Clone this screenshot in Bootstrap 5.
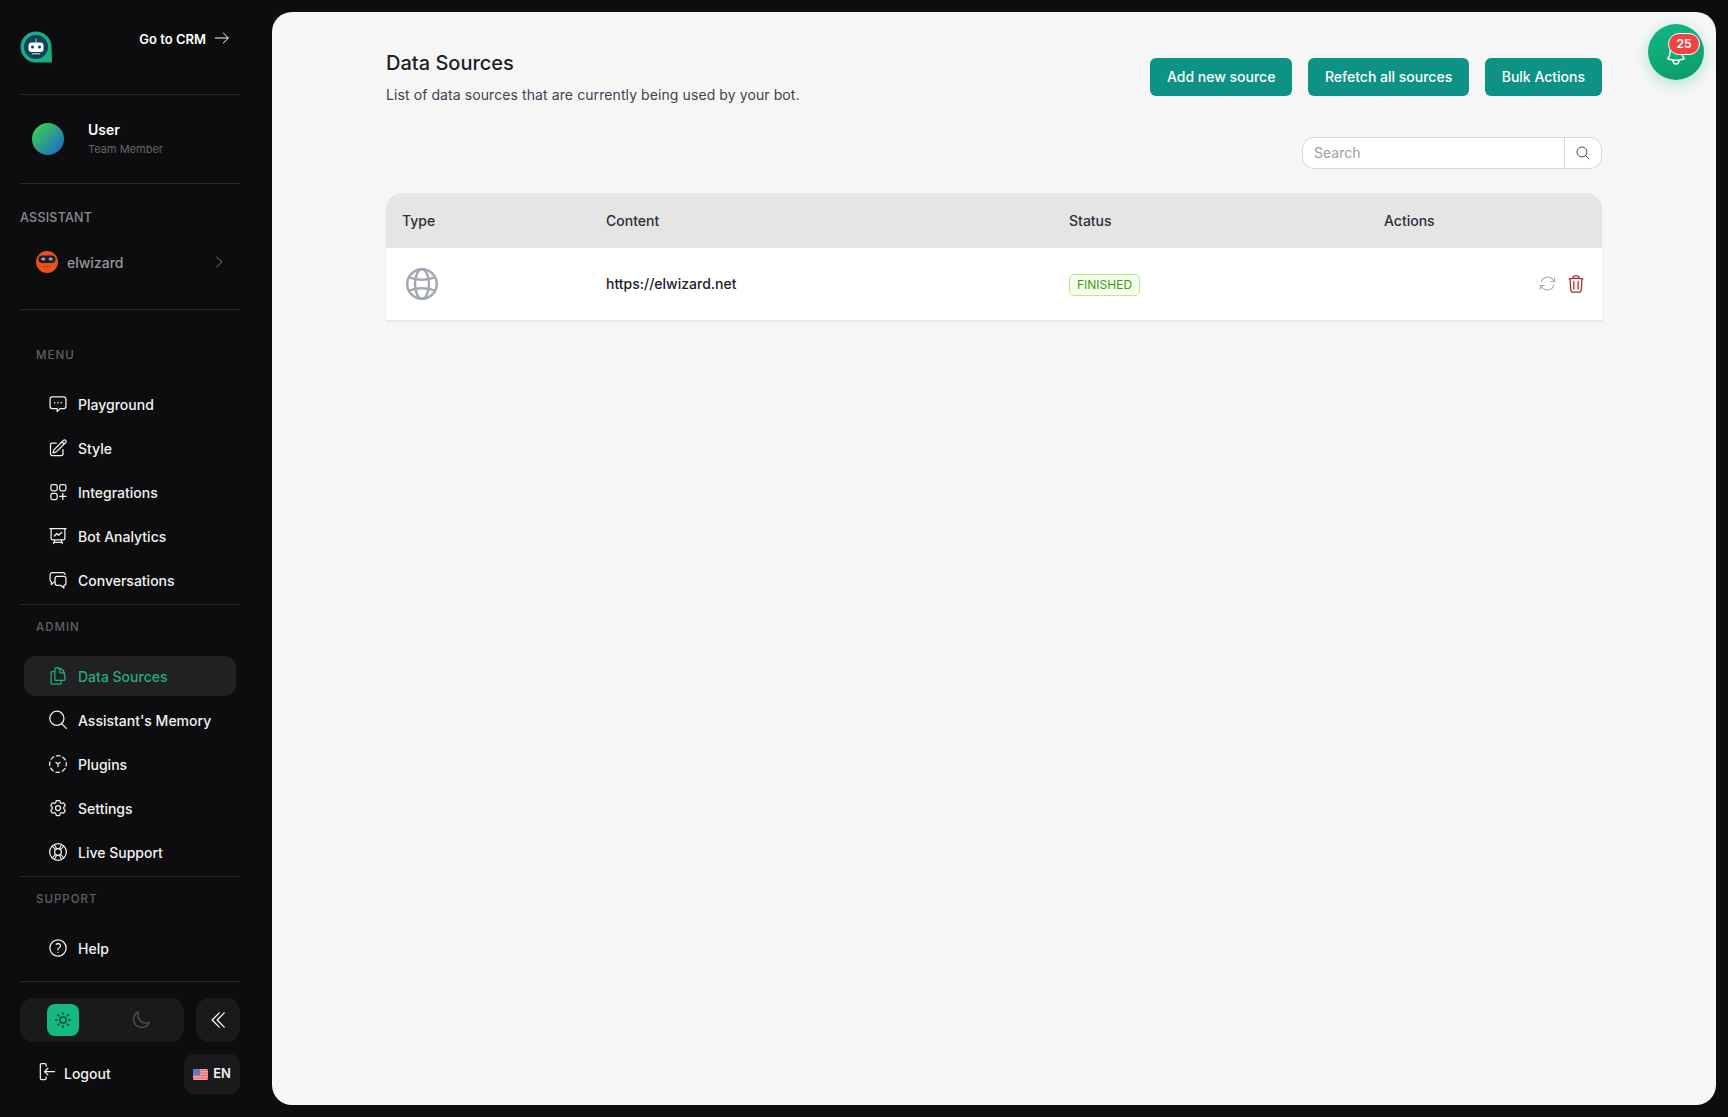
<!DOCTYPE html>
<html lang="en">
<head>
<meta charset="utf-8">
<title>Data Sources</title>
<link href="https://cdn.jsdelivr.net/npm/bootstrap@5.3.0/dist/css/bootstrap.min.css" rel="stylesheet">
<style>
html,body{height:100%;}
body{background:#0d0d0f;font-family:"Inter","Liberation Sans",sans-serif;font-size:14px;color:#1f2328;overflow:hidden;}
.shell{height:1117px;}
.side{width:272px;flex:none;padding:0 32px 0 20px;color:#fff;}
.rule{height:1px;background:#2b2b2d;flex:none;}
.brand{height:94px;padding-top:31px;}
.crm{color:#fff;font-weight:600;font-size:13px;text-decoration:none;height:16px;margin:-1px 10px 0 0;line-height:16px;}
.crm-t{margin-top:1px;}
.who{height:88px;padding-left:12px;gap:24px;}
.ava{width:32px;height:32px;border-radius:50%;background:linear-gradient(135deg,#3ddc3f,#1a5fd8);}
.who-name{font-weight:600;font-size:14px;line-height:17px;}
.who-role{font-size:11px;color:#66676b;line-height:16px;margin-top:3px;}
.asst-h{font-size:12.5px;font-weight:500;color:#8b8c8f;line-height:16px;padding-top:26px;letter-spacing:.25px;}
.asst-row{height:46px;margin:13px 0 24px;padding:0 15px 0 16px;color:#97989b;font-weight:500;gap:9px;}
.grp-h{font-size:11.5px;font-weight:500;letter-spacing:1px;color:#606165;line-height:18px;padding:13px 0 0 16px;margin-bottom:20px;}
.grp-first{padding-top:36px;}
.navi{list-style:none;padding:0;margin:0 4px;display:flex;flex-direction:column;gap:4px;}
.navi a{display:flex;align-items:center;height:40px;padding-left:24px;gap:10px;color:#f2f2f2;font-weight:500;font-size:14px;text-decoration:none;border-radius:12px;}
.navi a.on{background:#212123;color:#1fae7e;}
.ico{width:20px;height:20px;flex:none;fill:none;stroke:currentColor;stroke-width:1.5;stroke-linecap:round;stroke-linejoin:round;}
.crm-a{width:16px;height:16px;}
.chev{width:12px;height:12px;}
.gap-after{margin-bottom:4px;}
.tail-gap{margin-top:13px;}
.modes{height:44px;width:164px;background:#1a1a1c;border-radius:14px;margin-top:16px;padding-left:27px;}
.sunbox{width:32px;height:32px;border-radius:8px;background:#14b883;color:#0b3a2b;}
.moonbox{color:#55565a;margin-left:46px;width:32px;}
.collapse-btn{width:44px;height:44px;border-radius:14px;background:#1a1a1c;color:#fff;margin-top:16px;}
.foot{margin-top:12px;}
.out{color:#f2f2f2;font-weight:500;text-decoration:none;padding-left:17px;gap:7px;margin-bottom:2px;}
.out-i{margin-top:-3px;}
.lang{width:56px;height:40px;border-radius:10px;background:#1a1a1c;color:#f2f2f2;font-size:13px;font-weight:600;gap:5px;}
.pane{flex:1;margin:12px 12px 12px 0;background:#f6f6f7;border-radius:20px;padding:37px 114px 0;position:relative;}
.ttl{font-size:20px;font-weight:500;line-height:28px;color:#1c2127;margin:0;}
.sub{font-size:14px;line-height:20px;margin:8px 0 0;color:#3c4250;letter-spacing:.09px;}
.tealbtn{background:linear-gradient(180deg,#0d9484,#0e9186);border:0;color:#fff;font-weight:500;font-size:14px;height:38px;border-radius:6px;padding:0 17px 2px;}
.tealbtn:hover{background:#0d9484;color:#fff;}
.hdbtns{gap:15.5px;margin-top:9px;}
.srch{width:300px;margin-top:32px;height:32px;}
.srch .form-control{height:32px;font-size:14px;padding:0 11px 2px;border:1px solid #d6d8dc;border-radius:12px 0 0 12px;}
.srch .form-control::placeholder{color:#9a9ea6;}
.srch .input-group-text{height:32px;width:38px;background:#fff;border:1px solid #d6d8dc;border-radius:0 12px 12px 0;justify-content:center;padding:0 1px 0 0;color:#4b5058;}
.srch-i{width:16px;height:16px;}
.tblwrap{margin-top:24px;border-radius:16px 16px 0 0;overflow:hidden;box-shadow:0 1px 2px rgba(0,0,0,.05);}
.dt{margin:0;table-layout:fixed;width:1216px;}
.c1{width:204px;}.c2{width:463px;}.c3{width:315px;}.c4{width:234px;}
.dt th{background:#e5e5e6;height:55px;padding:0 16px 1px;vertical-align:middle;font-weight:500;font-size:14px;color:#2a2f36;border:0;}
.dt td{background:#fff;height:72px;padding:0 16px;vertical-align:middle;font-size:14px;font-weight:450;color:#1c2127;border-bottom:1px solid #e4e6e8;}
.gl{width:32px;height:32px;fill:none;stroke:#a2a7b1;stroke-width:2.4;display:block;margin-left:4px;}
.dt td.st{padding-top:2px;}
.fin{background:#f6ffed;border:1px solid #b7eb8f;color:#389e0d;font-size:12px;font-weight:400;border-radius:5px;padding:0 7px;height:22px;line-height:20px;}
.acts{gap:9px;}
.ref{color:#a6a9ae;width:19px;height:19px;stroke-width:1.3;}
.trs{color:#a4262c;width:20px;height:20px;}
.bellbtn{position:absolute;top:12px;right:12px;width:56px;height:56px;border-radius:50%;background:linear-gradient(160deg,#12b886,#0b9a68);box-shadow:0 4px 14px rgba(16,185,129,.3);color:#fff;}
.bell-i{position:absolute;left:16px;top:19px;width:24px;height:24px;}
.bell-n{position:absolute;left:20px;top:9px;width:32px;height:22px;border-radius:11px;background:#ef4444;border:1px solid #fff;color:#fff;font-size:12px;font-weight:600;line-height:20px;text-align:center;}
</style>
</head>
<body>
<div class="shell d-flex">
  <aside class="side d-flex flex-column">
    <div class="brand d-flex justify-content-between align-items-start">
      <svg width="32" height="32" viewBox="0 0 32 32" aria-label="logo"><defs><linearGradient id="lg" x1="0" y1="0" x2="1" y2="1"><stop offset="0" stop-color="#17ab9c"/><stop offset="1" stop-color="#15b177"/></linearGradient></defs><path d="M16 .5a15.500 15.500 0 0 1 15.500 15.500l.5 14.500a1 1 0 0 1-1 1H16A15.500 15.500 0 0 1 16 .5z" fill="url(#lg)"/><circle cx="16" cy="16" r="12" fill="#0f4254"/><rect x="8.500" y="11.500" width="15" height="9.500" rx="3" fill="#fff"/><circle cx="12.500" cy="16" r="1.500" fill="#0f4254"/><circle cx="19.500" cy="16" r="1.500" fill="#0f4254"/><path d="M16 7.500v4" stroke="#cfd8dc" stroke-width="1"/><rect x="11.500" y="22" width="9" height="1.500" rx=".7" fill="#9fb4bc"/></svg>
      <a class="crm d-flex align-items-start gap-2" href="#"><span class="crm-t">Go to CRM</span><svg class="ico crm-a" viewBox="0 0 24 24" stroke-width="1.300"><path d="M2 12h19M14 4.500l7.500 7.500-7.500 7.500"/></svg></a>
    </div>
    <div class="rule"></div>
    <div class="who d-flex align-items-center">
      <div class="ava flex-none"></div>
      <div><div class="who-name">User</div><div class="who-role">Team Member</div></div>
    </div>
    <div class="rule"></div>
    <div class="asst-h">ASSISTANT</div>
    <div class="asst-row d-flex align-items-center">
      <svg width="22" height="22" viewBox="0 0 22 22"><circle cx="11" cy="11" r="11" fill="#e9501f"/><rect x="2.500" y="4.500" width="17" height="7.500" rx="3.700" fill="#2a1a18"/><ellipse cx="7.300" cy="8" rx="2.200" ry="1.500" fill="#5fb4e8"/><ellipse cx="14.700" cy="8" rx="2.200" ry="1.500" fill="#5fb4e8"/><path d="M7 15.500h8" stroke="#8f2c0e" stroke-width="1.200" stroke-dasharray="1 1"/></svg>
      <span class="flex-grow-1">elwizard</span>
      <svg class="ico chev" viewBox="0 0 24 24" stroke-width="1.800"><path d="M7 2l11 10L7 22"/></svg>
    </div>
    <div class="rule"></div>
    <div class="grp-h grp-first">MENU</div>
    <ul class="navi gap-after">
      <li><a href="#"><svg class="ico" viewBox="0 0 24 24"><path d="M5 3.500h14A2.500 2.500 0 0 1 21.500 6v9a2.500 2.500 0 0 1-2.500 2.500h-4.500l-3.500 3.500v-3.500H5A2.500 2.500 0 0 1 2.500 15V6A2.500 2.500 0 0 1 5 3.500z"/><path d="M8 10.500h.01M12 10.500h.01M16 10.500h.01" stroke-width="2"/></svg>Playground</a></li>
      <li><a href="#"><svg class="ico" viewBox="0 0 24 24"><path d="M16.862 4.487l1.687-1.688a1.875 1.875 0 112.652 2.652L10.582 16.070a4.500 4.500 0 01-1.897 1.130L6 18l.8-2.685a4.500 4.500 0 011.130-1.897l8.932-8.931zm0 0L19.500 7.125M18 14v4.750A2.250 2.250 0 0115.750 21H5.250A2.250 2.250 0 013 18.750V8.250A2.250 2.250 0 015.250 6H10"/></svg>Style</a></li>
      <li><a href="#"><svg class="ico" viewBox="0 0 24 24"><rect x="3.500" y="3" width="7.500" height="7.500" rx="2"/><rect x="14" y="3" width="7.500" height="7.500" rx="2"/><rect x="3.500" y="13.500" width="7.500" height="7.500" rx="2"/><path d="M17.750 13.500V21M14 17.250h7.500"/></svg>Integrations</a></li>
      <li><a href="#"><svg class="ico" viewBox="0 0 24 24"><path d="M3.750 3v11.250A2.250 2.250 0 006 16.500h2.250M3.750 3h-1.500m1.500 0h16.500m0 0h1.500m-1.500 0v11.250A2.250 2.250 0 0118 16.500h-2.250m-7.500 0h7.500m-7.500 0l-1 3m8.500-3l1 3m0 0l.5 1.500m-.5-1.500h-9.500m0 0l-.5 1.500m.75-9l3-3 2.148 2.148A12.061 12.061 0 0116.500 7.605"/></svg>Bot Analytics</a></li>
      <li><a href="#"><svg class="ico" viewBox="0 0 24 24"><path d="M8 14.500H7l-3 3v-3.300A3 3 0 0 1 2.500 11.500V6A3 3 0 0 1 5.500 3h12a3 3 0 0 1 3 2.500"/><path d="M11 7.500h8a2.500 2.500 0 0 1 2.500 2.500v6a2.500 2.500 0 0 1-2.500 2.500v3l-3.500-3H11A2.500 2.500 0 0 1 8.500 16v-6A2.500 2.500 0 0 1 11 7.500z"/></svg>Conversations</a></li>
    </ul>
    <div class="rule"></div>
    <div class="grp-h">ADMIN</div>
    <ul class="navi gap-after">
      <li><a class="on" href="#"><svg class="ico" viewBox="0 0 24 24"><path d="M15.750 17.250v3.375c0 .621-.504 1.125-1.125 1.125h-9.750a1.125 1.125 0 01-1.125-1.125V7.875c0-.621.504-1.125 1.125-1.125H6.750a9.060 9.060 0 011.500.124m7.500 10.376h3.375c.621 0 1.125-.504 1.125-1.125V11.250c0-4.460-3.243-8.161-7.500-8.876a9.060 9.060 0 00-1.500-.124H9.375c-.621 0-1.125.504-1.125 1.125v3.500m7.500 10.375H9.375a1.125 1.125 0 01-1.125-1.125v-9.250m12 6.625v-1.875a3.375 3.375 0 00-3.375-3.375h-1.500a1.125 1.125 0 01-1.125-1.125v-1.500a3.375 3.375 0 00-3.375-3.375H9.750"/></svg>Data Sources</a></li>
      <li><a href="#"><svg class="ico" viewBox="0 0 24 24"><path d="M22 22l-5.700-5.700m0 0A8.500 8.500 0 1 0 4.300 4.300a8.500 8.500 0 0 0 12 12z"/></svg>Assistant's Memory</a></li>
      <li><a href="#"><svg class="ico" viewBox="0 0 24 24"><circle cx="12" cy="12" r="10" stroke-dasharray="4.500 3.350" stroke-dashoffset="2"/><path d="M9.500 10l2.500 2 2.500-2M12 12v3"/></svg>Plugins</a></li>
      <li><a href="#"><svg class="ico" viewBox="0 0 24 24"><path d="M9.594 3.940c.09-.542.56-.94 1.110-.94h2.593c.55 0 1.020.398 1.110.94l.213 1.281c.063.374.313.686.645.87.074.04.147.083.22.127.324.196.72.257 1.075.124l1.217-.456a1.125 1.125 0 011.370.49l1.296 2.247a1.125 1.125 0 01-.26 1.431l-1.003.827c-.293.24-.438.613-.431.992a6.759 6.759 0 010 .255c-.007.378.138.75.43.99l1.005.828c.424.35.534.954.26 1.430l-1.298 2.247a1.125 1.125 0 01-1.369.491l-1.217-.456c-.355-.133-.75-.072-1.076.124a6.570 6.570 0 01-.22.128c-.331.183-.581.495-.644.869l-.213 1.280c-.09.543-.56.941-1.110.941h-2.594c-.55 0-1.020-.398-1.110-.94l-.213-1.281c-.062-.374-.312-.686-.644-.87a6.520 6.520 0 01-.22-.127c-.325-.196-.72-.257-1.076-.124l-1.217.456a1.125 1.125 0 01-1.369-.49l-1.297-2.247a1.125 1.125 0 01.26-1.431l1.004-.827c.292-.24.437-.613.43-.992a6.932 6.932 0 010-.255c.007-.378-.138-.75-.43-.99l-1.004-.828a1.125 1.125 0 01-.26-1.430l1.297-2.247a1.125 1.125 0 011.370-.491l1.216.456c.356.133.751.072 1.076-.124.072-.044.146-.087.22-.128.332-.183.582-.495.644-.869l.214-1.281z"/><path d="M15 12a3 3 0 11-6 0 3 3 0 016 0z"/></svg>Settings</a></li>
      <li><a href="#"><svg class="ico" viewBox="0 0 24 24"><circle cx="12" cy="12" r="10"/><circle cx="12" cy="12" r="4"/><path d="M5 5l4.200 4.200M19 5l-4.200 4.200M5 19l4.200-4.200M19 19l-4.200-4.200M8 3.500l2.500 5M16 3.500l-2.500 5M8 20.500l2.500-5M16 20.500l-2.500-5" stroke-width="1.300"/></svg>Live Support</a></li>
    </ul>
    <div class="rule"></div>
    <div class="grp-h">SUPPORT</div>
    <ul class="navi">
      <li><a href="#"><svg class="ico" viewBox="0 0 24 24"><path d="M9.879 7.519c1.171-1.025 3.071-1.025 4.242 0 1.172 1.025 1.172 2.687 0 3.712-.203.179-.43.326-.67.442-.745.361-1.450.999-1.450 1.827v.75M21.750 12a9.750 9.750 0 11-19.500 0 9.750 9.750 0 0119.500 0zm-9.750 5.250h.008v.008H12v-.008z"/></svg>Help</a></li>
    </ul>
    <div class="rule tail-gap"></div>
    <div class="d-flex justify-content-between">
      <div class="modes d-flex align-items-center">
        <div class="sunbox d-flex align-items-center justify-content-center"><svg class="ico" viewBox="0 0 24 24"><path d="M12 3v2.250m6.364.386l-1.591 1.591M21 12h-2.250m-.386 6.364l-1.591-1.591M12 18.750V21m-4.773-4.227l-1.591 1.591M5.250 12H3m4.227-4.773L5.636 5.636M15.750 12a3.750 3.750 0 11-7.500 0 3.750 3.750 0 017.500 0z"/></svg></div>
        <div class="moonbox d-flex justify-content-center"><svg class="ico" viewBox="0 0 24 24" stroke-width="1.300"><path d="M21.752 15.002A9.718 9.718 0 0118 15.750c-5.385 0-9.750-4.365-9.750-9.750 0-1.330.266-2.597.748-3.752A9.753 9.753 0 003 11.250C3 16.635 7.365 21 12.750 21a9.753 9.753 0 009.002-5.998z"/></svg></div>
      </div>
      <div class="collapse-btn d-flex align-items-center justify-content-center"><svg class="ico" viewBox="0 0 24 24"><path d="M19.500 20.500L11 12l8.500-8.500M13.500 20.500L5 12l8.500-8.500"/></svg></div>
    </div>
    <div class="d-flex justify-content-between align-items-center foot">
      <a class="out d-flex align-items-center" href="#"><svg class="ico out-i" viewBox="0 0 24 24" stroke-width="1.400"><path d="M11 5V3.500A1.500 1.500 0 0 0 9.500 2h-4A1.500 1.500 0 0 0 4 3.500v16A1.500 1.500 0 0 0 5.500 21h4a1.500 1.500 0 0 0 1.500-1.500V18M21 11.500H9M13 7.500l-4 4 4 4"/></svg><span>Logout</span></a>
      <div class="lang d-flex align-items-center justify-content-center">
        <svg width="15" height="11" viewBox="0 0 15 11"><rect width="15" height="11" rx="1.500" fill="#f7a3a8"/><path d="M0 1.500h15M0 4h15M0 6.500h15M0 9h15" stroke="#e8606a" stroke-width="1"/><rect width="7" height="6" rx="1" fill="#5b7cc9"/></svg>
        <span>EN</span>
      </div>
    </div>
  </aside>
  <main class="pane">
    <div class="d-flex justify-content-between align-items-start">
      <div>
        <h1 class="ttl">Data Sources</h1>
        <p class="sub">List of data sources that are currently being used by your bot.</p>
      </div>
      <div class="d-flex hdbtns">
        <button class="btn tealbtn" type="button">Add new source</button>
        <button class="btn tealbtn" type="button">Refetch all sources</button>
        <button class="btn tealbtn" type="button">Bulk Actions</button>
      </div>
    </div>
    <div class="d-flex justify-content-end">
      <div class="input-group srch">
        <input class="form-control" type="text" placeholder="Search" aria-label="Search">
        <span class="input-group-text"><svg class="ico srch-i" viewBox="0 0 24 24"><path d="M21 21l-5.197-5.197m0 0A7.500 7.500 0 105.196 5.196a7.500 7.500 0 0010.607 10.607z"/></svg></span>
      </div>
    </div>
    <div class="tblwrap">
      <table class="table dt">
        <colgroup><col class="c1"><col class="c2"><col class="c3"><col class="c4"></colgroup>
        <thead><tr><th>Type</th><th>Content</th><th>Status</th><th>Actions</th></tr></thead>
        <tbody><tr>
          <td><svg class="gl" viewBox="0 0 32 32"><circle cx="16" cy="16" r="14.800"/><ellipse cx="16" cy="16" rx="7" ry="14.800"/><path d="M3.500 9.500c7 3 18 3 25 0M3.500 22.500c7-3 18-3 25 0"/></svg></td>
          <td>https://elwizard.net</td>
          <td class="st"><span class="badge fin d-inline-block">FINISHED</span></td>
          <td><div class="d-flex justify-content-end align-items-center acts">
            <svg class="ico ref" viewBox="0 0 24 24"><path d="M16.023 9.348h4.992v-.001M2.985 19.644v-4.992m0 0h4.992m-4.993 0l3.181 3.183a8.250 8.250 0 0013.803-3.700M4.031 9.865a8.250 8.250 0 0113.803-3.700l3.181 3.182m0-4.991v4.990"/></svg>
            <svg class="ico trs" viewBox="0 0 24 24"><path d="M14.740 9l-.346 9m-4.788 0L9.260 9m9.968-3.210c.342.052.682.107 1.022.166m-1.022-.165L18.160 19.673a2.250 2.250 0 01-2.244 2.077H8.084a2.250 2.250 0 01-2.244-2.077L4.772 5.790m14.456 0a48.108 48.108 0 00-3.478-.397m-12 .562c.34-.059.68-.114 1.022-.165m0 0a48.110 48.110 0 013.478-.397m7.500 0v-.916c0-1.180-.91-2.164-2.090-2.201a51.964 51.964 0 00-3.320 0c-1.180.037-2.090 1.022-2.090 2.201v.916m7.500 0a48.667 48.667 0 00-7.500 0"/></svg>
          </div></td>
        </tr></tbody>
      </table>
    </div>
    <div class="bellbtn">
      <svg class="ico bell-i" viewBox="0 0 24 24"><path d="M14.857 17.082a23.848 23.848 0 005.454-1.310A8.967 8.967 0 0118 9.750v-.7V9A6 6 0 006 9v.75a8.967 8.967 0 01-2.312 6.022c1.733.64 3.560 1.085 5.455 1.310m5.714 0a24.255 24.255 0 01-5.714 0m5.714 0a3 3 0 11-5.714 0"/></svg>
      <div class="bell-n">25</div>
    </div>
  </main>
</div>
<script src="https://cdn.jsdelivr.net/npm/bootstrap@5.3.0/dist/js/bootstrap.bundle.min.js"></script>
</body>
</html>
